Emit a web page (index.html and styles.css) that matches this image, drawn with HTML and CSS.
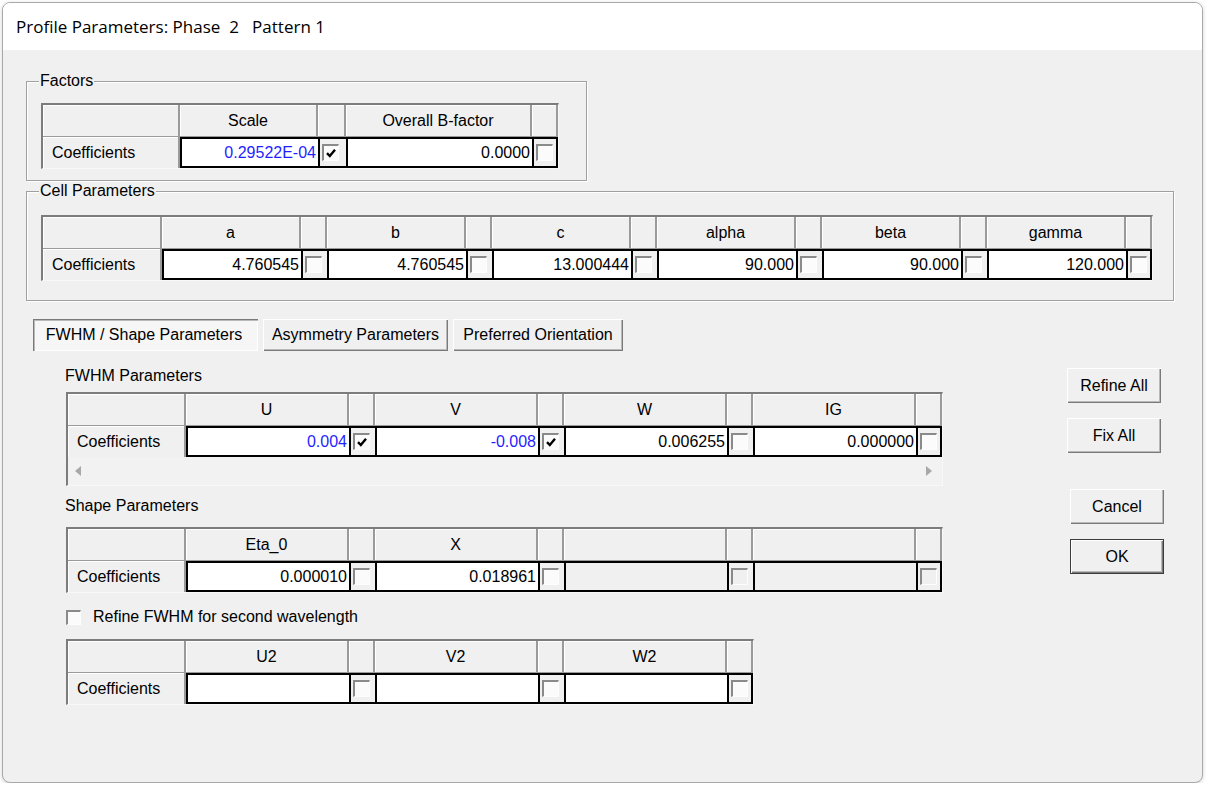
FILE: index.html
```html
<!DOCTYPE html>
<html>
<head>
<meta charset="utf-8">
<title>Profile Parameters</title>
<link rel="stylesheet" href="styles.css">
</head>
<body>
<div class="window">
  <div class="titlebar">Profile Parameters: Phase  2   Pattern 1</div>
  <div class="client">
    <section class="group group-factors">
      <div class="group-title">Factors</div>
      <div class="tbl tbl-factors">
        <div class="h"></div><div class="h">Scale</div><div class="h"></div><div class="h">Overall B-factor</div><div class="h"></div>
        <div class="rh">Coefficients</div>
        <div class="v blue">0.29522E-04</div>
        <div class="c"><span class="cb"><svg viewBox="0 0 12 12" class="tick"><path d="M2 6.2 L4.8 9 L10 2.8"/></svg></span></div>
        <div class="v">0.0000</div>
        <div class="c last"><span class="cb"></span></div>
      </div>
    </section>

    <section class="group group-cell">
      <div class="group-title">Cell Parameters</div>
      <div class="tbl tbl-cell">
        <div class="h"></div>
        <div class="h">a</div><div class="h"></div>
        <div class="h">b</div><div class="h"></div>
        <div class="h">c</div><div class="h"></div>
        <div class="h">alpha</div><div class="h"></div>
        <div class="h">beta</div><div class="h"></div>
        <div class="h">gamma</div><div class="h"></div>
        <div class="rh">Coefficients</div>
        <div class="v">4.760545</div><div class="c"><span class="cb"></span></div>
        <div class="v">4.760545</div><div class="c"><span class="cb"></span></div>
        <div class="v">13.000444</div><div class="c"><span class="cb"></span></div>
        <div class="v">90.000</div><div class="c"><span class="cb"></span></div>
        <div class="v">90.000</div><div class="c"><span class="cb"></span></div>
        <div class="v">120.000</div><div class="c last"><span class="cb"></span></div>
      </div>
    </section>

    <div class="lower">
      <div class="tabarea">
        <div class="tabs">
          <button class="tab tab-active tab-1">FWHM / Shape Parameters</button>
          <button class="tab tab-2">Asymmetry Parameters</button>
          <button class="tab tab-3">Preferred Orientation</button>
        </div>
        <div class="panel">
          <div class="sublabel fwhm-label">FWHM Parameters</div>
          <div class="tbl tbl-wide tbl-fwhm">
            <div class="h"></div>
            <div class="h">U</div><div class="h"></div>
            <div class="h">V</div><div class="h"></div>
            <div class="h">W</div><div class="h"></div>
            <div class="h">IG</div><div class="h"></div>
            <div class="rh">Coefficients</div>
            <div class="v blue">0.004</div><div class="c"><span class="cb"><svg viewBox="0 0 12 12" class="tick"><path d="M2 6.2 L4.8 9 L10 2.8"/></svg></span></div>
            <div class="v blue">-0.008</div><div class="c"><span class="cb"><svg viewBox="0 0 12 12" class="tick"><path d="M2 6.2 L4.8 9 L10 2.8"/></svg></span></div>
            <div class="v">0.006255</div><div class="c"><span class="cb"></span></div>
            <div class="v">0.000000</div><div class="c last"><span class="cb"></span></div>
            <div class="scroll"><span class="arrow arrow-l"></span><span class="arrow arrow-r"></span></div>
          </div>

          <div class="sublabel shape-label">Shape Parameters</div>
          <div class="tbl tbl-wide tbl-shape">
            <div class="h"></div>
            <div class="h">Eta_0</div><div class="h"></div>
            <div class="h">X</div><div class="h"></div>
            <div class="h"></div><div class="h"></div>
            <div class="h"></div><div class="h"></div>
            <div class="rh">Coefficients</div>
            <div class="v">0.000010</div><div class="c"><span class="cb"></span></div>
            <div class="v">0.018961</div><div class="c"><span class="cb"></span></div>
            <div class="v empty"></div><div class="c"><span class="cb cb-dim"></span></div>
            <div class="v empty"></div><div class="c last"><span class="cb cb-dim"></span></div>
          </div>

          <label class="chkrow"><span class="cb cb-plain"></span><span>Refine FWHM for second wavelength</span></label>

          <div class="tbl tbl-u2">
            <div class="h"></div>
            <div class="h">U2</div><div class="h"></div>
            <div class="h">V2</div><div class="h"></div>
            <div class="h">W2</div><div class="h"></div>
            <div class="rh">Coefficients</div>
            <div class="v"></div><div class="c"><span class="cb"></span></div>
            <div class="v"></div><div class="c"><span class="cb"></span></div>
            <div class="v"></div><div class="c last"><span class="cb"></span></div>
          </div>
        </div>
      </div>

      <div class="side">
        <button class="btn b-refine">Refine All</button>
        <button class="btn b-fix">Fix All</button>
        <button class="btn b-cancel">Cancel</button>
        <button class="btn btn-default b-ok">OK</button>
      </div>
    </div>
  </div>
</div>
</body>
</html>
```

FILE: styles.css
```css
* { box-sizing: border-box; }

html, body {
  margin: 0;
  padding: 0;
}

body {
  background: #ffffff;
  font-family: "Liberation Sans", Arial, sans-serif;
  font-size: 16px;
  color: #000;
}

.window {
  margin: 2px 0 0 2px;
  width: 1201px;
  height: 781px;
  border: 1px solid #a9a9a9;
  border-radius: 8px;
  overflow: hidden;
  display: flex;
  flex-direction: column;
  background: #f0f0f0;
  box-shadow: 0 1px 4px rgba(0, 0, 0, 0.18);
}

.titlebar {
  height: 47px;
  flex: none;
  background: #ffffff;
  line-height: 47px;
  padding-left: 13px;
  font-family: "Open Sans", "Noto Sans", sans-serif;
  font-size: 17px;
  white-space: pre;
  color: #000;
}

.client {
  flex: 1;
  padding: 31px 0 0 23px;
}

/* group boxes */
.group {
  border: 1px solid #a0a0a0;
  box-shadow: inset 1px 1px 0 #ffffff, 1px 1px 0 #ffffff;
  padding-left: 14px;
}

.group-factors {
  width: 561px;
  padding-bottom: 11px;
}

.group-cell {
  width: 1148px;
  margin-top: 10px;
  padding-bottom: 19px;
}

.group-title {
  width: fit-content;
  margin: -10px 0 0 -2px;
  padding: 0 1px;
  line-height: 18px;
  background: #f0f0f0;
}

.group-factors .tbl { margin-top: 13px; }
.group-cell .tbl { margin-top: 15px; }

/* grids */
.tbl {
  display: grid;
  width: max-content;
  border-style: solid;
  border-width: 2px 1px 1px 2px;
  border-color: #7c7c7c #f8f8f8 #f8f8f8 #7c7c7c;
  line-height: 1;
}

.tbl-factors { grid-template-columns: 137px 138px 28px 186px 26px; }
.tbl-cell { grid-template-columns: 119px repeat(6, 139px 26px); }
.tbl-wide { grid-template-columns: 118px repeat(4, 163px 26px); }
.tbl-u2 { grid-template-columns: 118px repeat(3, 163px 26px); }

.h {
  height: 32px;
  background: #f0f0f0;
  border-right: 2px solid #9a9a9a;
  border-bottom: 1px solid #9a9a9a;
  box-shadow: inset 1px 1px 0 #ffffff;
  display: flex;
  align-items: center;
  justify-content: center;
  padding-top: 1px;
}

.rh {
  height: 31px;
  background: #f0f0f0;
  border-right: 2px solid #9a9a9a;
  box-shadow: inset 1px 1px 0 #ffffff;
  display: flex;
  align-items: center;
  padding-left: 9px;
}

.v {
  height: 31px;
  background: #ffffff;
  border: 2px solid #000;
  border-right: 0;
  display: flex;
  align-items: center;
  justify-content: flex-end;
  padding-right: 2px;
}

.v.empty { background: #f0f0f0; }

.c {
  height: 31px;
  background: #f0f0f0;
  border: 2px solid #000;
  border-right: 0;
  display: flex;
  align-items: center;
  padding-left: 2px;
}

.c.last { border-right: 2px solid #000; }

.blue { color: #1f1fff; }

.cb {
  width: 17px;
  height: 17px;
  flex: none;
  border-style: solid;
  border-width: 2px 1px 1px 2px;
  border-color: #8a8a8a #fdfdfd #fdfdfd #8a8a8a;
  background: #fbfbfb;
  display: flex;
  align-items: center;
  justify-content: center;
}

.cb-dim { background: #f0f0f0; }

.tick {
  width: 12px;
  height: 12px;
  fill: none;
  stroke: #000;
  stroke-width: 2.4;
}

.scroll {
  grid-column: 1 / -1;
  height: 28px;
  background: #f2f2f2;
  display: flex;
  align-items: center;
  justify-content: space-between;
  padding: 0 10px 0 7px;
}

.arrow {
  width: 0;
  height: 0;
  border-style: solid;
}

.arrow-l {
  border-width: 5px 6px 5px 0;
  border-color: transparent #a8a8a8 transparent transparent;
}

.arrow-r {
  border-width: 5px 0 5px 6px;
  border-color: transparent transparent transparent #a8a8a8;
}

/* lower area */
.lower {
  display: flex;
  margin-top: 18px;
}

.tabarea { flex: 1; }

.tabs {
  display: flex;
  gap: 5px;
  margin-left: 7px;
}

button {
  font: inherit;
  color: inherit;
  padding: 0;
  margin: 0;
  cursor: default;
}

.tab,
.btn {
  height: 32px;
  background: #f0f0f0;
  border: none;
  box-shadow: inset 1px 1px 0 #ffffff, inset -1px -1px 0 #7a7a7a, inset -2px -2px 0 #b9b9b9;
}

.tab-1 { width: 225px; padding-right: 3px; }
.tab-2 { width: 185px; }
.tab-3 { width: 170px; }

.tab-active {
  background: #f6f6f6;
  box-shadow: inset 1px 1px 0 #7a7a7a, inset 2px 2px 0 #b9b9b9, inset -1px -1px 0 #ffffff;
}

.panel { padding-left: 40px; }

.sublabel {
  line-height: 18px;
  margin-left: -1px;
}

.fwhm-label { margin-top: 16px; }
.tbl-fwhm { margin-top: 7px; }
.shape-label { margin-top: 11px; }
.tbl-shape { margin-top: 12px; }

.chkrow {
  margin-top: 15px;
  display: flex;
  align-items: center;
  gap: 12px;
  height: 18px;
}

.cb-plain {
  width: 15px;
  height: 15px;
  background: #fbfbfb;
}

.tbl-u2 { margin-top: 13px; }

.side {
  width: 97px;
  margin-right: 38px;
  display: flex;
  flex-direction: column;
  align-items: flex-start;
}

.btn {
  width: 94px;
  height: 35px;
}

.b-refine { margin-top: 49px; }
.b-fix { margin-top: 15px; }
.b-cancel { margin-top: 36px; margin-left: 3px; }
.b-ok { margin-top: 15px; margin-left: 3px; }

.btn-default {
  box-shadow: inset 0 0 0 1px #3c3c3c, inset 2px 2px 0 #ffffff, inset -2px -2px 0 #7a7a7a, inset -3px -3px 0 #b9b9b9;
}
```
